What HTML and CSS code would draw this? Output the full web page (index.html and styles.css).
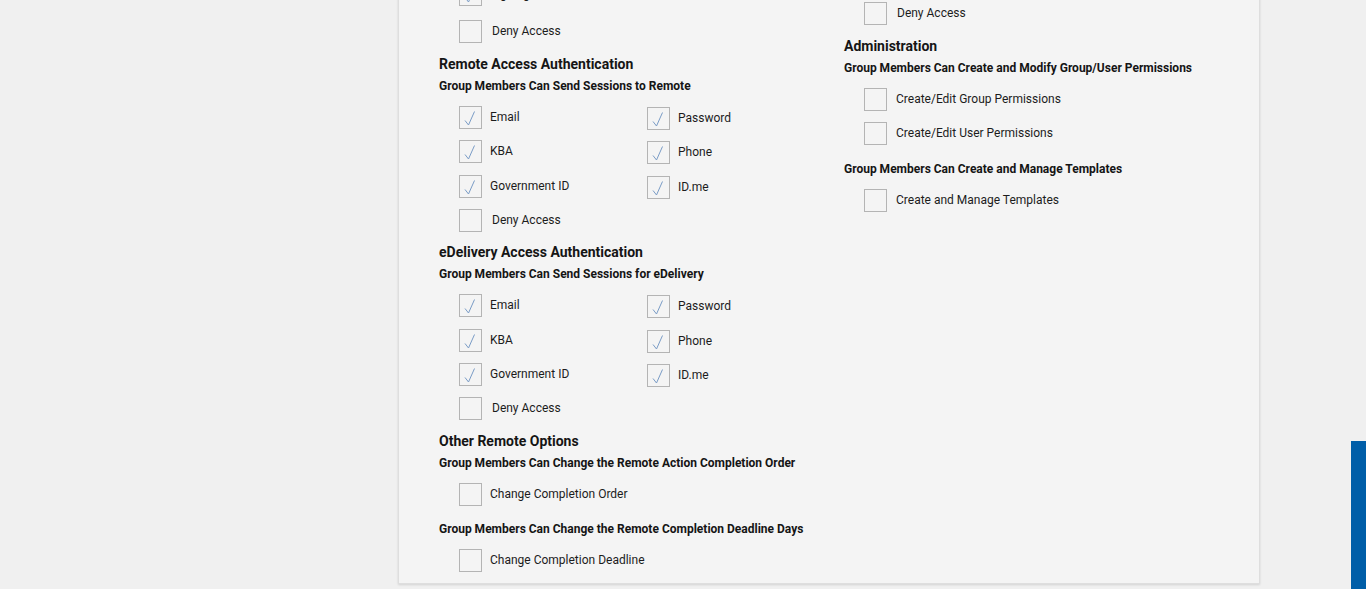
FILE: index.html
```html
<!DOCTYPE html>
<html lang="en">
<head>
<meta charset="utf-8">
<title>Group Permissions</title>
<link rel="stylesheet" href="styles.css">
</head>
<body>
<main class="panel">
  <div class="col col-left">
    <div class="list list-top">
      <label class="opt"><span class="box checked"><svg viewBox="0 0 21 21"><path d="M5 13.5 L8.5 18 L14.5 4.5"/></svg></span><span class="txt">Signing</span></label>
      <label class="opt"><span class="box"></span><span class="txt deny">Deny Access</span></label>
    </div>

    <section class="sec sec-first">
      <h2 class="h">Remote Access Authentication</h2>
      <h3 class="sub">Group Members Can Send Sessions to Remote</h3>
      <div class="grid">
        <label class="opt"><span class="box checked"><svg viewBox="0 0 21 21"><path d="M5 13.5 L8.5 18 L14.5 4.5"/></svg></span><span class="txt">Email</span></label>
        <label class="opt r"><span class="box checked"><svg viewBox="0 0 21 21"><path d="M5 13.5 L8.5 18 L14.5 4.5"/></svg></span><span class="txt">Password</span></label>
        <label class="opt"><span class="box checked"><svg viewBox="0 0 21 21"><path d="M5 13.5 L8.5 18 L14.5 4.5"/></svg></span><span class="txt">KBA</span></label>
        <label class="opt r"><span class="box checked"><svg viewBox="0 0 21 21"><path d="M5 13.5 L8.5 18 L14.5 4.5"/></svg></span><span class="txt">Phone</span></label>
        <label class="opt"><span class="box checked"><svg viewBox="0 0 21 21"><path d="M5 13.5 L8.5 18 L14.5 4.5"/></svg></span><span class="txt">Government ID</span></label>
        <label class="opt r"><span class="box checked"><svg viewBox="0 0 21 21"><path d="M5 13.5 L8.5 18 L14.5 4.5"/></svg></span><span class="txt">ID.me</span></label>
        <label class="opt"><span class="box"></span><span class="txt deny">Deny Access</span></label>
      </div>
    </section>

    <section class="sec">
      <h2 class="h">eDelivery Access Authentication</h2>
      <h3 class="sub">Group Members Can Send Sessions for eDelivery</h3>
      <div class="grid">
        <label class="opt"><span class="box checked"><svg viewBox="0 0 21 21"><path d="M5 13.5 L8.5 18 L14.5 4.5"/></svg></span><span class="txt">Email</span></label>
        <label class="opt r"><span class="box checked"><svg viewBox="0 0 21 21"><path d="M5 13.5 L8.5 18 L14.5 4.5"/></svg></span><span class="txt">Password</span></label>
        <label class="opt"><span class="box checked"><svg viewBox="0 0 21 21"><path d="M5 13.5 L8.5 18 L14.5 4.5"/></svg></span><span class="txt">KBA</span></label>
        <label class="opt r"><span class="box checked"><svg viewBox="0 0 21 21"><path d="M5 13.5 L8.5 18 L14.5 4.5"/></svg></span><span class="txt">Phone</span></label>
        <label class="opt"><span class="box checked"><svg viewBox="0 0 21 21"><path d="M5 13.5 L8.5 18 L14.5 4.5"/></svg></span><span class="txt">Government ID</span></label>
        <label class="opt r"><span class="box checked"><svg viewBox="0 0 21 21"><path d="M5 13.5 L8.5 18 L14.5 4.5"/></svg></span><span class="txt">ID.me</span></label>
        <label class="opt"><span class="box"></span><span class="txt deny">Deny Access</span></label>
      </div>
    </section>

    <section class="sec sec-other">
      <h2 class="h">Other Remote Options</h2>
      <h3 class="sub">Group Members Can Change the Remote Action Completion Order</h3>
      <div class="list">
        <label class="opt"><span class="box"></span><span class="txt">Change Completion Order</span></label>
      </div>
      <h3 class="sub sub-next">Group Members Can Change the Remote Completion Deadline Days</h3>
      <div class="list">
        <label class="opt"><span class="box"></span><span class="txt">Change Completion Deadline</span></label>
      </div>
    </section>
  </div>

  <div class="col col-right">
    <div class="list list-first">
      <label class="opt"><span class="box"></span><span class="txt deny">Deny Access</span></label>
    </div>

    <section class="sec sec-admin">
      <h2 class="h">Administration</h2>
      <h3 class="sub">Group Members Can Create and Modify Group/User Permissions</h3>
      <div class="list">
        <label class="opt"><span class="box"></span><span class="txt wide">Create/Edit Group Permissions</span></label>
        <label class="opt"><span class="box"></span><span class="txt wide">Create/Edit User Permissions</span></label>
      </div>
      <h3 class="sub sub-next sub-tpl">Group Members Can Create and Manage Templates</h3>
      <div class="list">
        <label class="opt"><span class="box"></span><span class="txt wide">Create and Manage Templates</span></label>
      </div>
    </section>
  </div>
</main>
<div class="side-tab"></div>
</body>
</html>
```

FILE: styles.css
```css
html, body {
  margin: 0;
  padding: 0;
}

body {
  background: #f0f0f0;
  font-family: Roboto, "Liberation Sans", Arial, sans-serif;
  color: #1c1c1c;
  height: 589px;
  overflow: hidden;
}

.panel {
  box-sizing: border-box;
  width: 862px;
  margin: -40px 0 0 398px;
  padding: 8px 0 11px 40px;
  background: #f4f4f4;
  border: 1px solid #dedede;
  box-shadow: 0 1px 2px rgba(0, 0, 0, 0.12);
  display: grid;
  grid-template-columns: 405px 1fr;
  align-items: start;
}

.col {
  display: flex;
  flex-direction: column;
}

.list {
  display: flex;
  flex-direction: column;
  gap: 11px;
  padding-left: 20px;
  margin-top: 12px;
}

.col-left > .list.list-top {
  margin-top: 14px;
  gap: 14px;
}

.col-right > .list.list-first {
  margin-top: 33px;
}

.grid {
  display: grid;
  grid-template-columns: 188px auto;
  row-gap: 11.4px;
  padding-left: 20px;
  margin-top: 12px;
}

.sec {
  margin-top: 11px;
}

.sec.sec-first,
.sec.sec-other,
.sec.sec-admin {
  margin-top: 12px;
}

.h {
  margin: 0;
  font-size: 14px;
  line-height: 18px;
  font-weight: 700;
  color: #151515;
}

.sub {
  margin: 5px 0 0;
  font-size: 12px;
  line-height: 16px;
  font-weight: 700;
  color: #151515;
}

.sub.sub-next {
  margin-top: 15px;
}

.sub.sub-tpl {
  margin-top: 16px;
}

.opt {
  display: flex;
  align-items: center;
  height: 23px;
}

.opt.r {
  position: relative;
  top: 1px;
}

.box {
  box-sizing: border-box;
  flex: none;
  width: 23px;
  height: 23px;
  border: 1px solid #b4b4b4;
  background: #f4f4f4;
  display: flex;
}

.box svg {
  width: 21px;
  height: 21px;
}

.box svg path {
  fill: none;
  stroke: #7a9cc6;
  stroke-width: 1;
}

.txt {
  margin-left: 8px;
  margin-top: -1px;
  font-size: 12px;
  line-height: 16px;
  color: #1c1c1c;
}

.txt.deny {
  margin-left: 10px;
}

.txt.wide {
  margin-left: 9px;
}

.side-tab {
  position: fixed;
  right: 0;
  bottom: 0;
  width: 15px;
  height: 148px;
  background: #005ea8;
}
```
